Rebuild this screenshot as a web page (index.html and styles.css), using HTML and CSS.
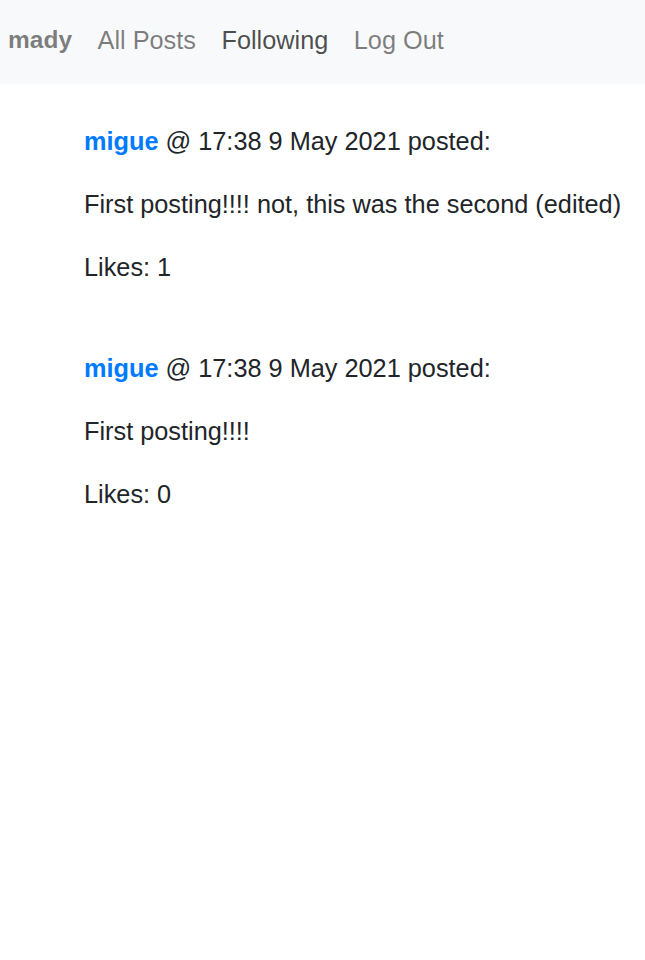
FILE: index.html
```html
<!DOCTYPE html>
<html>
<head>
<meta charset="utf-8">
<link rel="stylesheet" href="styles.css">
</head>
<body>
<nav class="navbar">
  <a class="brand">mady</a>
  <a class="nav-link">All Posts</a>
  <a class="nav-link active">Following</a>
  <a class="nav-link">Log Out</a>
</nav>
<main class="posts">
  <div class="post">
    <p class="meta"><a class="user">migue</a> @ 17:38 9 May 2021 posted:</p>
    <p class="body">First posting!!!! not, this was the second (edited)</p>
    <p class="likes">Likes: 1</p>
  </div>
  <div class="post">
    <p class="meta"><a class="user">migue</a> @ 17:38 9 May 2021 posted:</p>
    <p class="body">First posting!!!!</p>
    <p class="likes">Likes: 0</p>
  </div>
</main>
</body>
</html>
```
FILE: styles.css
```css
html, body {
  margin: 0;
  padding: 0;
  background: #fff;
  font-family: "Liberation Sans", Arial, sans-serif;
  font-size: 25.3px;
  color: #212529;
}
.navbar {
  display: flex;
  align-items: center;
  gap: 25.5px;
  height: 84px;
  padding: 0 8px 4px;
  box-sizing: border-box;
  background: #f8f9fa;
}
.navbar a {
  text-decoration: none;
  color: rgba(0,0,0,.5);
}
.brand {
  font-weight: bold;
  font-size: 24.5px;
}
.nav-link.active {
  color: rgba(0,0,0,.7);
}
.posts {
  padding: 43px 0 0 84px;
}
.post {
  display: flex;
  flex-direction: column;
  gap: 35px;
  margin-bottom: 73px;
}
.post p {
  margin: 0;
  line-height: 28px;
}
.user {
  color: #007bff;
  font-weight: bold;
}
```
